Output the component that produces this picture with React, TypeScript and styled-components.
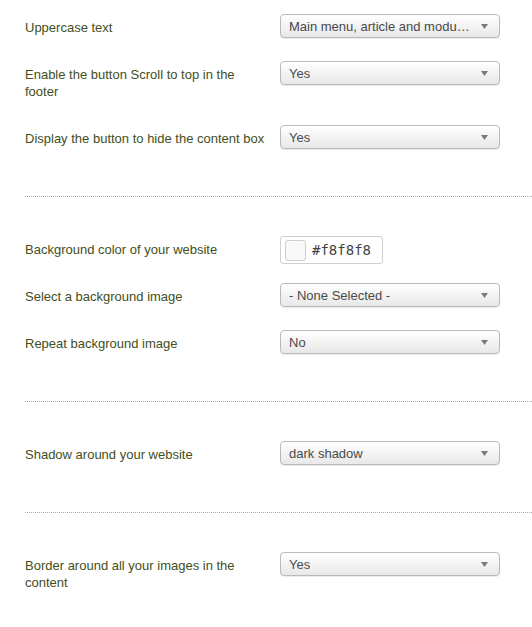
import React from 'react';
import styled, { createGlobalStyle } from 'styled-components';

const GlobalStyle = createGlobalStyle`
  body {
    margin: 0;
    background: #fff;
    font-family: "Liberation Sans", Arial, Helvetica, sans-serif;
  }
`;

type Field =
  | { label: string; kind: 'select'; value: string }
  | { label: string; kind: 'color'; value: string };

const sections: Field[][] = [
  [
    { label: 'Uppercase text', kind: 'select', value: 'Main menu, article and modu…' },
    { label: 'Enable the button Scroll to top in the footer', kind: 'select', value: 'Yes' },
    { label: 'Display the button to hide the content box', kind: 'select', value: 'Yes' },
  ],
  [
    { label: 'Background color of your website', kind: 'color', value: '#f8f8f8' },
    { label: 'Select a background image', kind: 'select', value: '- None Selected -' },
    { label: 'Repeat background image', kind: 'select', value: 'No' },
  ],
  [{ label: 'Shadow around your website', kind: 'select', value: 'dark shadow' }],
  [{ label: 'Border around all your images in the content', kind: 'select', value: 'Yes' }],
];

const App: React.FC = () => (
  <>
    <GlobalStyle />
    <Page>
      {sections.map((fields, i) => (
        <React.Fragment key={i}>
          {i > 0 && <Separator />}
          <Section>
            {fields.map((f) => (
              <Row key={f.label}>
                <Label>{f.label}</Label>
                {f.kind === 'select' ? (
                  <SelectBox>
                    <SelectText>{f.value}</SelectText>
                    <svg width="7" height="5" viewBox="0 0 7 5">
                      <path d="M0 0 H7 L3.5 5 Z" fill="#7a7a7a" />
                    </svg>
                  </SelectBox>
                ) : (
                  <ColorInput>
                    <Swatch $color={f.value} />
                    <ColorText>{f.value}</ColorText>
                  </ColorInput>
                )}
              </Row>
            ))}
          </Section>
        </React.Fragment>
      ))}
    </Page>
  </>
);

const Page = styled.main`
  padding: 14px 0 40px 25px;
`;

const Section = styled.div`
  display: flex;
  flex-direction: column;
  gap: 19px;
`;

const Separator = styled.hr`
  margin: 43px 0 39px;
  border: 0;
  border-top: 1px dotted #a8a8a8;
  height: 0;
`;

const Row = styled.div`
  display: grid;
  grid-template-columns: 255px 220px;
  align-items: start;
  min-height: 28px;
`;

const Label = styled.div`
  max-width: 243px;
  padding: 5px 0 6px 0;
  font-size: 13px;
  line-height: 17px;
  color: #434e1b;
`;

const SelectBox = styled.div`
  box-sizing: border-box;
  height: 24px;
  display: flex;
  align-items: center;
  justify-content: space-between;
  padding: 0 11px 0 8px;
  border: 1px solid #b9b9b9;
  border-radius: 4px;
  background: linear-gradient(#ffffff, #f1f1f1 60%, #e8e8e8);
  box-shadow: 0 1px 1px rgba(0, 0, 0, 0.08);
  svg {
    flex: none;
  }
`;

const SelectText = styled.span`
  font-size: 13px;
  color: #4a4a4a;
  white-space: nowrap;
  overflow: hidden;
`;

const ColorInput = styled.div`
  box-sizing: border-box;
  width: 103px;
  height: 28px;
  display: flex;
  align-items: center;
  gap: 6px;
  padding: 0 4px;
  border: 1px solid #cfcfcf;
  border-radius: 3px;
  background: #fff;
`;

const Swatch = styled.span<{ $color: string }>`
  box-sizing: border-box;
  width: 21px;
  height: 21px;
  border: 1px solid #cdcdcd;
  border-radius: 3px;
  background: ${(p) => p.$color};
`;

const ColorText = styled.span`
  font-family: "DejaVu Sans Mono", "Liberation Mono", monospace;
  font-size: 14px;
  color: #444;
`;

export default App;
